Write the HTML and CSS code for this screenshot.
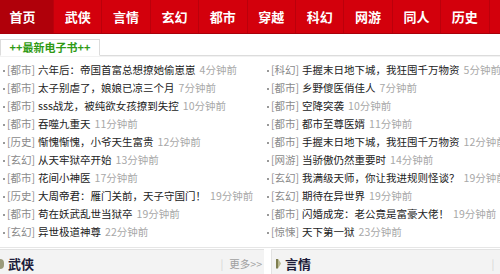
FILE: index.html
```html
<!DOCTYPE html>
<html lang="zh-CN">

<head>
  <meta charset="UTF-8">
  <title>最新电子书</title>
  <link rel="stylesheet" href="styles.css">
</head>

<body>
  <div class="page">
    <ul class="nav">
      <li class="current">首页</li>
      <li>武侠</li>
      <li>言情</li>
      <li>玄幻</li>
      <li>都市</li>
      <li>穿越</li>
      <li>科幻</li>
      <li>网游</li>
      <li>同人</li>
      <li>历史</li>
      <li>惊悚</li>
    </ul>

    <div class="tabs">
      <span class="tab">++最新电子书++</span>
    </div>

    <div class="latest">
      <ul class="list">
        <li><span class="cat">[都市]</span><a class="title">六年后：帝国首富总想撩她偷崽崽</a><span class="time">4分钟前</span></li>
        <li><span class="cat">[都市]</span><a class="title">太子别虐了，娘娘已凉三个月</a><span class="time">7分钟前</span></li>
        <li><span class="cat">[都市]</span><a class="title">sss战龙，被纯欲女孩撩到失控</a><span class="time">10分钟前</span></li>
        <li><span class="cat">[都市]</span><a class="title">吞噬九重天</a><span class="time">11分钟前</span></li>
        <li><span class="cat">[历史]</span><a class="title">惭愧惭愧，小爷天生富贵</a><span class="time">12分钟前</span></li>
        <li><span class="cat">[玄幻]</span><a class="title">从天牢狱卒开始</a><span class="time">13分钟前</span></li>
        <li><span class="cat">[都市]</span><a class="title">花间小神医</a><span class="time">17分钟前</span></li>
        <li><span class="cat">[历史]</span><a class="title">大周帝君：雁门关前，天子守国门！</a><span class="time">19分钟前</span></li>
        <li><span class="cat">[都市]</span><a class="title">苟在妖武乱世当狱卒</a><span class="time">19分钟前</span></li>
        <li><span class="cat">[玄幻]</span><a class="title">异世极道神尊</a><span class="time">22分钟前</span></li>
      </ul>
      <ul class="list">
        <li><span class="cat">[科幻]</span><a class="title">手握末日地下城，我狂囤千万物资</a><span class="time">5分钟前</span></li>
        <li><span class="cat">[都市]</span><a class="title">乡野傻医俏佳人</a><span class="time">7分钟前</span></li>
        <li><span class="cat">[都市]</span><a class="title">空降突袭</a><span class="time">10分钟前</span></li>
        <li><span class="cat">[都市]</span><a class="title">都市至尊医婿</a><span class="time">11分钟前</span></li>
        <li><span class="cat">[都市]</span><a class="title">手握末日地下城，我狂囤千万物资</a><span class="time">12分钟前</span></li>
        <li><span class="cat">[网游]</span><a class="title">当骄傲仍然重要时</a><span class="time">14分钟前</span></li>
        <li><span class="cat">[玄幻]</span><a class="title">我满级天师，你让我进规则怪谈？</a><span class="time">19分钟前</span></li>
        <li><span class="cat">[玄幻]</span><a class="title">期待在异世界</a><span class="time">19分钟前</span></li>
        <li><span class="cat">[都市]</span><a class="title">闪婚成宠：老公竟是富豪大佬！</a><span class="time">19分钟前</span></li>
        <li><span class="cat">[惊悚]</span><a class="title">天下第一狱</a><span class="time">23分钟前</span></li>
      </ul>
    </div>

    <div class="sections">
      <div class="sec-head">
        <span class="mark"></span>
        <h2>武侠</h2>
        <span class="more"><span class="sep">|</span>更多&gt;&gt;</span>
      </div>
      <div class="sec-head">
        <span class="mark arrow"></span>
        <h2>言情</h2>
        <span class="more"><span class="sep">|</span>更多&gt;&gt;</span>
      </div>
    </div>
  </div>
</body>

</html>
```

FILE: styles.css
```css
* {
  box-sizing: border-box;
}

body {
  margin: 0;
  font-family: "Noto Sans CJK SC", "DejaVu Sans", sans-serif;
  background: #fff;
  overflow: hidden;
}

.page {
  width: 540px;
}

ul {
  list-style: none;
  margin: 0;
  padding: 0;
}

/* top menu */
.nav {
  display: flex;
  height: 34px;
  background: #d3000c;
  border-bottom: 1px solid #a8000a;
}

.nav li {
  width: 48.4px;
  flex-shrink: 0;
  text-align: center;
  line-height: 33px;
  font-size: 13px;
  font-weight: bold;
  color: #fff;
  border-left: 1px solid #bb000b;
}

.nav li.current {
  width: 53px;
  padding-right: 8px;
  background: #b0000a;
  border-left: none;
}

/* tab strip */
.tabs {
  display: flex;
  margin-top: 5px;
  border-bottom: 1px solid #dcdcdc;
  box-shadow: 0 1px 0 #f2f2f2;
}

.tab {
  width: 100px;
  height: 17px;
  margin-bottom: -1px;
  border: 1px solid #dcdcdc;
  border-bottom-color: #fff;
  background: #fff;
  text-align: center;
  font-size: 11px;
  line-height: 15px;
  font-weight: bold;
  color: #2f9a14;
}

/* latest list */
.latest {
  display: flex;
  padding-top: 5px;
}

.list {
  width: 264px;
  flex-shrink: 0;
}

.list li {
  height: 18px;
  line-height: 18px;
  font-size: 10.5px;
  white-space: nowrap;
  padding-left: 7px;
  position: relative;
}

.list li::before {
  content: "";
  position: absolute;
  left: 3px;
  top: 9px;
  width: 2px;
  height: 2px;
  background: #999;
}

.cat {
  color: #8a8a8a;
  margin-right: 3px;
}

.title {
  color: #222;
  margin-right: 4px;
}

.time {
  color: #a8a8a8;
}

/* section headers */
.sections {
  display: flex;
  gap: 7px;
  margin-top: 6px;
  border-top: 1px solid #e6e6e6;
  padding-top: 1px;
}

.sec-head {
  width: 264px;
  flex-shrink: 0;
  height: 28px;
  display: flex;
  align-items: center;
  background: #f3f3f3;
  border-top: 1px solid #e2e2e2;
}

.sec-head + .sec-head {
  border-left: 1px solid #e2e2e2;
  padding-left: 4px;
}

.mark {
  width: 4px;
  height: 10px;
  background: #9a9a7a;
  border-radius: 0 5px 5px 0;
  margin-right: 4px;
}

.mark.arrow {
  width: 5px;
  border-radius: 0;
  background: linear-gradient(90deg, #7e7e50 0 2px, #b8b890 2px);
  clip-path: polygon(0 0, 2px 0, 100% 50%, 2px 100%, 0 100%);
}

.sec-head h2 {
  margin: 0;
  font-size: 13px;
  font-weight: bold;
  color: #1c1c3a;
}

.more {
  margin-left: auto;
  font-size: 10.5px;
  color: #a0a0a0;
  padding-right: 2px;
}

.sep {
  color: #d4d4d4;
  margin-right: 6px;
}
```
